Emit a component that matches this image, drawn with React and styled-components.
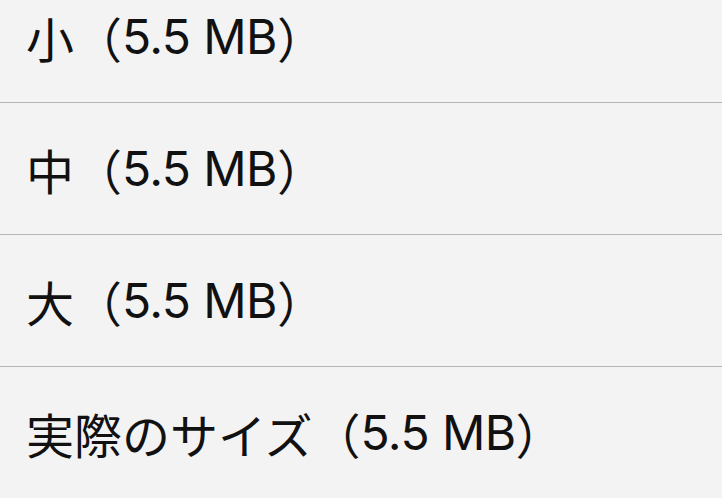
import React from 'react';
import styled, { createGlobalStyle } from 'styled-components';

const GlobalStyles = createGlobalStyle`
  html, body {
    margin: 0;
    padding: 0;
    background: #f3f3f3;
  }
  body {
    font-family: Inter, "Noto Sans CJK JP", sans-serif;
    color: #111;
    overflow: hidden;
  }
`;

const Sheet = styled.div`
  width: 722px;
  height: 498px;
  overflow: hidden;
  background: #f3f3f3;
`;

const List = styled.ul`
  list-style: none;
  margin: -29px 0 0 0;
  padding: 0;
`;

const Row = styled.li`
  display: flex;
  align-items: center;
  height: 131px;
  padding-left: 26px;
  border-bottom: ${p => (p.last ? 'none' : '1px solid #b6b6b6')};
  font-size: 48px;
  line-height: 1;
  white-space: pre;
`;

const Label = styled.span`
  font-family: "Noto Sans CJK JP", sans-serif;
`;

// full-width bracket, kept at a full em whatever the font trims
const Paren = styled.span`
  display: inline-block;
  width: 1em;
  font-family: "Noto Sans CJK JP", sans-serif;
  font-feature-settings: "halt" 0, "chws" 0;
  text-align: ${p => (p.open ? 'right' : 'left')};
`;

const Size = styled.span`
  font-family: Inter, sans-serif;
  letter-spacing: -0.6px;
`;

const sizes = ['小', '中', '大', '実際のサイズ'];

function App() {
  return (
    <Sheet>
      <GlobalStyles />
      <List>
        {sizes.map((label, i) => (
          <Row key={label} last={i === sizes.length - 1}>
            <Label>{label}</Label>
            <Paren open>（</Paren>
            <Size>5.5 MB</Size>
            <Paren>）</Paren>
          </Row>
        ))}
      </List>
    </Sheet>
  );
}

export default App;
